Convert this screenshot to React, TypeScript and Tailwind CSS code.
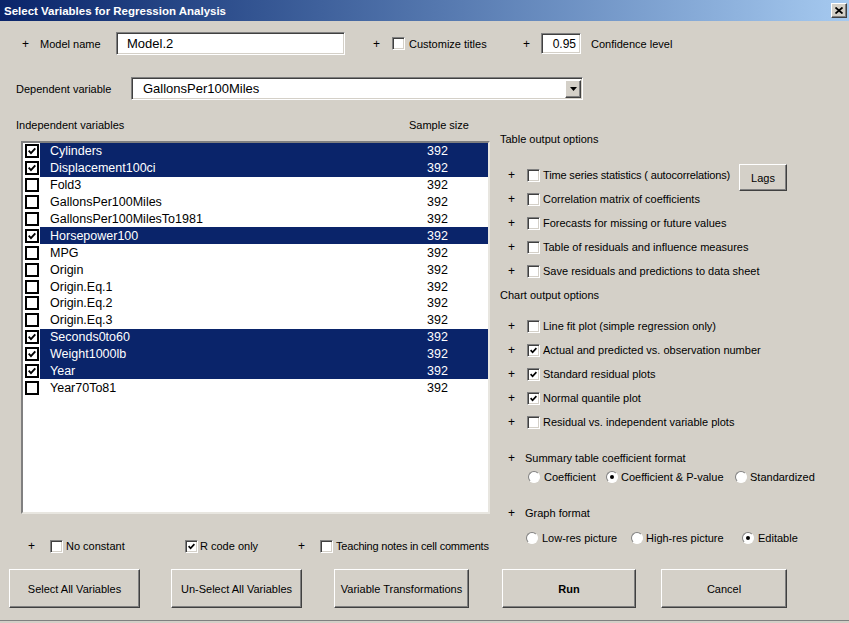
const vars: [string, boolean][] = [
  ["Cylinders", true],
  ["Displacement100ci", true],
  ["Fold3", false],
  ["GallonsPer100Miles", false],
  ["GallonsPer100MilesTo1981", false],
  ["Horsepower100", true],
  ["MPG", false],
  ["Origin", false],
  ["Origin.Eq.1", false],
  ["Origin.Eq.2", false],
  ["Origin.Eq.3", false],
  ["Seconds0to60", true],
  ["Weight1000lb", true],
  ["Year", true],
  ["Year70To81", false],
]

function Tick({ size = 7 }: { size?: number }) {
  return (
    <svg width={size} height={size} viewBox="0 0 7 7">
      <path d="M0.6 3.2 L2.6 5.3 L6.4 1.2" fill="none" stroke="#000" strokeWidth="1.7" />
    </svg>
  )
}

function Check({ checked }: { checked?: boolean }) {
  return (
    <span className="flex h-[13px] w-[13px] shrink-0 items-center justify-center border border-t-[#808080] border-l-[#808080] border-b-white border-r-white bg-white shadow-[inset_1px_1px_0_#404040,inset_-1px_-1px_0_#d4d0c8]">
      {checked && <Tick />}
    </span>
  )
}

function ListCheck({ checked }: { checked?: boolean }) {
  return (
    <span className="flex h-[14px] w-[14px] shrink-0 items-center justify-center border-2 border-black bg-white">
      {checked && <Tick size={8} />}
    </span>
  )
}

function Radio({ on }: { on?: boolean }) {
  return (
    <span className="flex h-[12px] w-[12px] shrink-0 items-center justify-center rounded-full border border-t-[#808080] border-l-[#808080] border-b-white border-r-white bg-white">
      {on && <span className="h-[4px] w-[4px] rounded-full bg-black" />}
    </span>
  )
}

function Plus({ w }: { w: string }) {
  return <span className={`${w} shrink-0 text-[12px]`}>+</span>
}

const raised =
  "flex items-center justify-center border border-t-white border-l-white border-b-[#404040] border-r-[#404040] bg-[#d4d0c8] shadow-[inset_-1px_-1px_0_#808080]"

const sunken =
  "border border-t-[#808080] border-l-[#808080] border-b-white border-r-white bg-white shadow-[inset_1px_1px_0_#404040,inset_-1px_-1px_0_#d4d0c8]"

function OptRow({ label, checked, w = "" }: { label: string; checked?: boolean; w?: string }) {
  return (
    <div className={`flex h-[24px] shrink-0 items-center pl-[18px] ${w}`}>
      <Plus w="w-[19px]" />
      <Check checked={checked} />
      <span className="ml-[3px] whitespace-nowrap">{label}</span>
    </div>
  )
}

export default function App() {
  return (
    <div className="h-[623px] w-[849px] overflow-hidden bg-[#d4d0c8] font-['Liberation_Sans',Arial,sans-serif] text-[11px] leading-[14px] text-black">
      {/* title bar */}
      <div className="flex h-[21px] items-center justify-between bg-gradient-to-r from-[#0a246a] to-[#a6caf0] pl-[4px] pr-[2px]">
        <span className="text-[11.5px] font-bold text-white">Select Variables for Regression Analysis</span>
        <span className={`${raised} h-[15px] w-[16px]`}>
          <svg width="8" height="7" viewBox="0 0 8 7">
            <path d="M0.5 0.5 L7.5 6.5 M7.5 0.5 L0.5 6.5" stroke="#000" strokeWidth="1.8" />
          </svg>
        </span>
      </div>

      {/* model name row */}
      <div className="mt-[11px] flex h-[23px] items-center">
        <Plus w="ml-[22px] w-[18px]" />
        <span className="w-[76px] shrink-0">Model name</span>
        <div className={`${sunken} flex h-[23px] w-[229px] items-center pl-[10px] text-[13px]`}>Model.2</div>
        <Plus w="ml-[28px] w-[19px]" />
        <Check />
        <span className="ml-[4px] w-[114px] shrink-0">Customize titles</span>
        <Plus w="w-[18px]" />
        <div className={`${sunken} flex h-[21px] w-[40px] items-center justify-end pr-[4px] text-[12px]`}>0.95</div>
        <span className="ml-[10px]">Confidence level</span>
      </div>

      {/* dependent variable */}
      <div className="mt-[22px] flex h-[23px] items-center pl-[16px]">
        <span className="w-[115px] shrink-0">Dependent variable</span>
        <div className={`${sunken} flex h-[23px] w-[452px] items-center justify-between pl-[11px] pr-[1px] text-[13px]`}>
          <span>GallonsPer100Miles</span>
          <span className={`${raised} h-[18px] w-[16px]`}>
            <svg width="7" height="4" viewBox="0 0 7 4">
              <path d="M0 0 H7 L3.5 4 Z" fill="#000" />
            </svg>
          </span>
        </div>
      </div>

      {/* main area */}
      <div className="flex h-[453px]">
        <div className="w-[490px] shrink-0">
          <div className="mt-[18px] flex h-[13px] items-center pl-[16px]">
            <span className="w-[393px] shrink-0">Independent variables</span>
            <span>Sample size</span>
          </div>
          <div className="ml-[21px] mt-[10px] h-[373px] w-[469px] border-2 border-t-[#808080] border-l-[#808080] border-b-[#e8e6e0] border-r-[#e8e6e0] bg-white pl-[2px] text-[12.5px]">
            {vars.map(([name, sel]) => (
              <div key={name} className="flex h-[16.9px] items-center">
                <ListCheck checked={sel} />
                <div className={`ml-[1px] flex h-full flex-1 items-center pl-[10px] ${sel ? "bg-[#0a246a] text-white" : ""}`}>
                  <span className="w-[377px] shrink-0">{name}</span>
                  <span>392</span>
                </div>
              </div>
            ))}
          </div>
          <div className="mt-[25px] flex h-[14px] items-center whitespace-nowrap">
            <Plus w="ml-[28px] w-[22px]" />
            <Check />
            <span className="ml-[3px] w-[119px] shrink-0">No constant</span>
            <Check checked />
            <span className="ml-[2px] w-[98px] shrink-0">R code only</span>
            <Plus w="w-[22px]" />
            <Check />
            <span className="ml-[3px] tracking-[-0.2px]">Teaching notes in cell comments</span>
          </div>
        </div>

        <div className="flex-1">
          <div className="mt-[32px] h-[14px] pl-[10px]">Table output options</div>
          <div className="mt-[17px]">
            <div className="flex h-[24px] items-start tracking-[-0.15px]">
              <OptRow label="Time series statistics ( autocorrelations)" w="w-[249px]" />
              <span className={`${raised} mt-[1px] h-[27px] w-[48px] shrink-0 tracking-normal`}>Lags</span>
            </div>
            <OptRow label="Correlation matrix of coefficients" />
            <OptRow label="Forecasts for missing or future values" />
            <OptRow label="Table of residuals and influence measures" />
            <OptRow label="Save residuals and predictions to data sheet" />
          </div>
          <div className="mt-[5px] h-[14px] pl-[10px]">Chart output options</div>
          <div className="mt-[12px]">
            <OptRow label="Line fit plot (simple regression only)" />
            <OptRow label="Actual and predicted vs. observation number" checked />
            <OptRow label="Standard residual plots" checked />
            <OptRow label="Normal quantile plot" checked />
            <OptRow label="Residual vs. independent variable plots" />
          </div>
          <div className="mt-[17px] flex h-[14px] items-center pl-[18px]">
            <Plus w="w-[17px]" />
            <span>Summary table coefficient format</span>
          </div>
          <div className="mt-[4px] flex h-[16px] items-center whitespace-nowrap pl-[38px]">
            <Radio />
            <span className="ml-[4px] w-[62px] shrink-0">Coefficient</span>
            <Radio on />
            <span className="ml-[3px] w-[114px] shrink-0">Coefficient &amp; P-value</span>
            <Radio />
            <span className="ml-[3px]">Standardized</span>
          </div>
          <div className="mt-[21px] flex h-[14px] items-center pl-[18px]">
            <Plus w="w-[17px]" />
            <span>Graph format</span>
          </div>
          <div className="mt-[10px] flex h-[16px] items-center whitespace-nowrap pl-[36px]">
            <Radio />
            <span className="ml-[4px] w-[89px] shrink-0">Low-res picture</span>
            <Radio />
            <span className="ml-[3px] w-[96px] shrink-0">High-res picture</span>
            <Radio on />
            <span className="ml-[4px]">Editable</span>
          </div>
        </div>
      </div>

      {/* buttons */}
      <div className="mt-[16px] flex h-[39px]">
        <span className={`${raised} ml-[9px] w-[131px]`}>Select All Variables</span>
        <span className={`${raised} ml-[31px] w-[131px]`}>Un-Select All Variables</span>
        <span className={`${raised} ml-[32px] w-[135px]`}>Variable Transformations</span>
        <span className={`${raised} ml-[33px] w-[134px] font-bold`}>Run</span>
        <span className={`${raised} ml-[25px] w-[126px]`}>Cancel</span>
      </div>
      <div className="mt-[12px] h-[3px] border-t border-[#808080]" />
    </div>
  )
}
